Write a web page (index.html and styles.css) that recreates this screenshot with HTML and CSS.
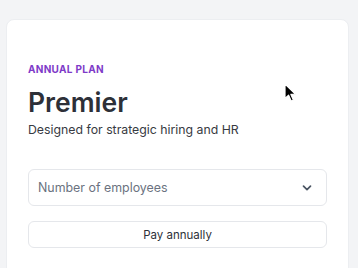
FILE: index.html
```html
<!DOCTYPE html>
<html>
<head>
<meta charset="utf-8">
<link rel="stylesheet" href="styles.css">
</head>
<body>
<div class="card">
  <div class="eyebrow">ANNUAL PLAN</div>
  <h1 class="title">Premier</h1>
  <p class="subtitle">Designed for strategic hiring and HR</p>
  <div class="select">
    <span class="placeholder">Number of employees</span>
    <svg class="chevron" width="12" height="12" viewBox="0 0 12 12"><path d="M2.5 4.2 L6 7.7 L9.5 4.2" fill="none" stroke="#4b5563" stroke-width="1.7" stroke-linecap="round" stroke-linejoin="round"/></svg>
  </div>
  <button class="pay">Pay annually</button>
</div>
<svg class="cursor" width="14" height="20" viewBox="0 0 14 20"><path d="M1 1 L1 15.5 L4.6 12.2 L7.2 18 L9.4 17 L6.9 11.4 L11.6 11.2 Z" fill="#000" stroke="#fff" stroke-width="1.2" stroke-linejoin="round"/></svg>
</body>
</html>
```
FILE: styles.css
```css
html, body {
  margin: 0;
  padding: 0;
  background: #f3f4f6;
  font-family: Inter, "Noto Sans", sans-serif;
  height: 100%;
  overflow: hidden;
}
.card {
  margin: 19px 0 0 6px;
  width: 343px;
  box-sizing: border-box;
  background: #fff;
  border-radius: 8px;
  border: 1px solid #eceef1;
  padding: 41px 21px 40px 21px;
  min-height: 300px;
}
.eyebrow {
  font-size: 10px;
  line-height: 16px;
  font-weight: 700;
  letter-spacing: 0.3px;
  color: #7e3ac8;
}
.title {
  margin: 8px 0 0 0;
  font-size: 26.5px;
  line-height: 34px;
  font-weight: 600;
  color: #2d3038;
}
.subtitle {
  margin: 2px 0 0 0;
  font-size: 12.3px;
  line-height: 18px;
  color: #373a42;
}
.select {
  margin-top: 30px;
  height: 37px;
  box-sizing: border-box;
  border: 1px solid #e5e7eb;
  border-radius: 6px;
  display: flex;
  align-items: center;
  justify-content: space-between;
  padding: 0 13px 0 9px;
}
.placeholder {
  font-size: 12.4px;
  color: #6b7280;
}
.chevron {
  display: block;
}
.pay {
  margin-top: 15px;
  width: 100%;
  height: 27px;
  box-sizing: border-box;
  border: 1px solid #e5e7eb;
  border-radius: 6px;
  background: #fff;
  font-family: Inter, "Noto Sans", sans-serif;
  font-size: 11.5px;
  color: #2d3038;
  display: block;
}
.cursor {
  position: absolute;
  left: 284px;
  top: 83px;
}
```
